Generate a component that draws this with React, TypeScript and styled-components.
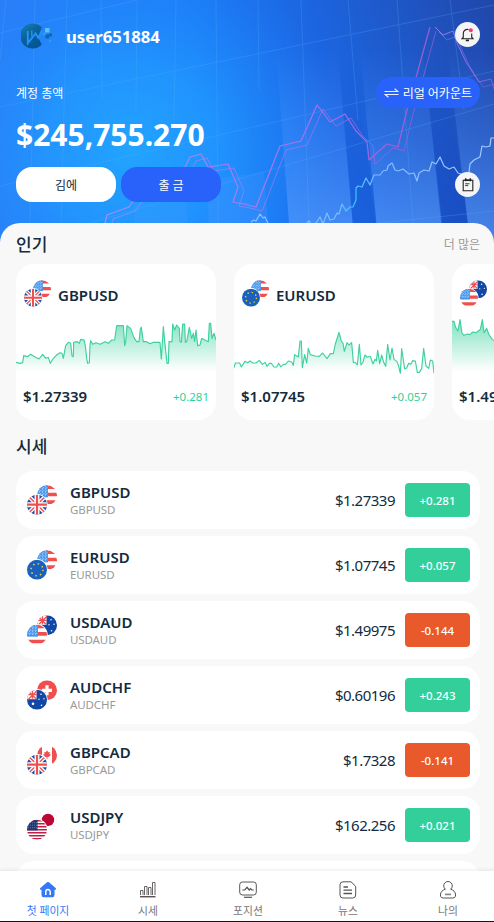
import { ReactNode, useId } from "react";
import styled, { createGlobalStyle } from "styled-components";

type FlagCode = "us" | "usDark" | "gb" | "eu" | "au" | "ch" | "ca" | "jp";

const popular = [
  {
    name: "GBPUSD", price: "$1.27339", change: "+0.281", front: "gb" as FlagCode, back: "us" as FlagCode, origin: [48, 270],
    points: "48,412 60,415 68,413 71,392 82,395 92,388 105,396 117,402 128,388 137,400 145,397 151,415 160,400 170,390 180,383 186,385 190,400 197,362 205,352 212,355 216,393 220,395 221,352 232,350 238,355 242,343 252,345 256,362 260,400 263,415 268,413 270,360 272,347 278,358 288,353 300,358 315,350 325,355 335,345 344,345 350,302 370,302 374,362 377,350 381,302 392,310 402,338 410,350 417,350 421,312 424,307 430,350 440,350 450,356 460,352 480,352 484,402 490,305 496,368 501,415 505,415 507,350 516,350 518,297 524,315 530,300 538,310 540,350 544,352 548,297 554,297 556,352 560,350 568,307 575,340 580,325 584,350 588,315 593,362 600,360 605,340 615,345 625,350 628,295 632,295 636,340 642,325 648,345",
  },
  {
    name: "EURUSD", price: "$1.07745", change: "+0.057", front: "eu" as FlagCode, back: "us" as FlagCode, origin: [27, 165],
    points: "27,323 31,309 44,309 49,321 60,304 68,308 75,303 83,309 93,309 103,301 112,313 120,307 126,319 133,310 139,310 147,321 155,321 161,310 167,320 176,313 182,313 190,303 200,306 205,316 209,284 220,291 225,243 229,243 232,323 239,284 245,309 250,265 256,284 270,288 283,289 293,279 306,296 316,281 325,281 331,252 342,217 349,243 354,250 358,274 366,248 372,255 380,248 385,307 391,308 397,315 403,253 408,315 414,306 420,285 427,292 436,289 444,312 450,298 454,303 458,271 464,311 470,285 476,307 482,319 488,253 495,300 501,264 507,298 516,305 521,318 526,340 530,266 539,327 545,324 551,310 557,313 563,302 571,303 577,337 583,337 590,326 596,265 603,318 611,325 616,300 623,303 627,340",
  },
  {
    name: "USDAUD", price: "$1.49975", change: "-0.144", front: "us" as FlagCode, back: "au" as FlagCode, origin: [681, 165],
    points: "681,184 687,184 692,202 699,213 705,179 711,219 717,226 727,222 735,224 743,216 752,218 760,213 766,208 772,179 777,218 785,205 791,222 800,236 808,242 850,242",
  },
];

const quotes: { name: string; price: string; change: string; front: FlagCode; back: FlagCode }[] = [
  { name: "GBPUSD", price: "$1.27339", change: "+0.281", front: "gb", back: "us" },
  { name: "EURUSD", price: "$1.07745", change: "+0.057", front: "eu", back: "us" },
  { name: "USDAUD", price: "$1.49975", change: "-0.144", front: "us", back: "au" },
  { name: "AUDCHF", price: "$0.60196", change: "+0.243", front: "au", back: "ch" },
  { name: "GBPCAD", price: "$1.7328", change: "-0.141", front: "gb", back: "ca" },
  { name: "USDJPY", price: "$162.256", change: "+0.021", front: "usDark", back: "jp" },
];

const flagArt: Record<FlagCode, ReactNode> = {
  us: (
    <>
      <rect width="20" height="20" fill="#fff" />
      <path d="M0 1.8h20M0 9.2h20M0 16.8h20" stroke="#f04f4d" strokeWidth="3.6" />
      <rect width="11" height="12" fill="#4795ea" />
      <path d="M2.5 0v12M5.5 0v12M8.5 0v12M0 2.5h11M0 5.5h11M0 8.5h11" stroke="#b5d6fb" strokeWidth=".8" strokeDasharray="1.6 1.3" />
    </>
  ),
  usDark: (
    <>
      <rect width="20" height="20" fill="#fff" />
      <path d="M0 1h20M0 4h20M0 7h20M0 10h20M0 13h20M0 16h20M0 19h20" stroke="#bf1f45" strokeWidth="1.5" />
      <rect width="10.5" height="10.7" fill="#21376f" />
      <path d="M1 3h9M1 5.5h9M1 8h9" stroke="#8d9bc0" strokeWidth=".8" strokeDasharray=".8 1.2" />
    </>
  ),
  gb: (
    <>
      <rect width="20" height="20" fill="#2251a5" />
      <path d="M0 0l20 20M20 0L0 20" stroke="#fff" strokeWidth="4" />
      <path d="M0 0l20 20M20 0L0 20" stroke="#f04f4d" strokeWidth="1.4" />
      <path d="M10 0v20M0 10h20" stroke="#fff" strokeWidth="5" />
      <path d="M10 0v20M0 10h20" stroke="#f04f4d" strokeWidth="2.2" />
    </>
  ),
  eu: (
    <>
      <rect width="20" height="20" fill="#1961bd" />
      <circle cx="10" cy="10" r="6" fill="none" stroke="#e6cf4a" strokeWidth="1.5" strokeDasharray="1.5 3.21" />
    </>
  ),
  au: (
    <>
      <rect width="20" height="20" fill="#1347a5" />
      <rect width="9.5" height="9.5" fill="#fff" />
      <path d="M0 0l9 9M10 1L1 10M5.5 0v9M0 5h9.5" stroke="#f04f4d" strokeWidth="1.3" />
      <circle cx="6" cy="14" r="1.3" fill="#fff" />
      <circle cx="14" cy="4.5" r=".8" fill="#fff" />
      <circle cx="17" cy="9" r=".7" fill="#fff" />
      <circle cx="12" cy="9.5" r=".7" fill="#fff" />
      <circle cx="14.5" cy="15.5" r=".8" fill="#fff" />
    </>
  ),
  ch: (
    <>
      <rect width="20" height="20" fill="#f04f4d" />
      <path d="M10 5v10M5 10h10" stroke="#fff" strokeWidth="3.2" />
    </>
  ),
  ca: (
    <>
      <rect width="20" height="20" fill="#fff" />
      <path d="M0 0h5v20H0zM15 0h5v20h-5z" fill="#f04f4d" />
      <path d="M10 5l1.2 2 1.6-.4-.4 2 1.6.8-2.4 2.2H10.4V14h-.8v-2.4H8.4L6 9.4l1.6-.8-.4-2 1.6.4z" fill="#f04f4d" />
    </>
  ),
  jp: (
    <>
      <rect width="20" height="20" fill="#fff" />
      <circle cx="11" cy="9.6" r="6.2" fill="#bd0634" />
    </>
  ),
};

function Flags({ front, back, size }: { front: FlagCode; back: FlagCode; size: number }) {
  const id = useId();
  return (
    <svg width={size} height={size} viewBox="0 0 30 30">
      <clipPath id={id}>
        <circle cx="10" cy="10" r="10" />
      </clipPath>
      <g transform="translate(10 0.3)">
        <g clipPath={`url(#${id})`}>{flagArt[back]}</g>
        {back === "jp" && <circle cx="10" cy="10" r="9.8" fill="none" stroke="#eeeeee" strokeWidth=".5" />}
      </g>
      <circle cx="10" cy="19.7" r="10.7" fill="#fff" />
      <g transform="translate(0 9.7)">
        <g clipPath={`url(#${id})`}>{flagArt[front]}</g>
      </g>
    </svg>
  );
}

function Chart({ points, origin }: { points: string; origin: number[] }) {
  const id = useId();
  const [x, y] = origin;
  return (
    <ChartSvg viewBox={`${x} ${y} 600 180`}>
      <linearGradient id={id} gradientUnits="userSpaceOnUse" x1="0" x2="0" y1={y + 20} y2={y + 168}>
        <stop offset="0" stopColor="#33cf9b" stopOpacity=".6" />
        <stop offset="1" stopColor="#33cf9b" stopOpacity="0" />
      </linearGradient>
      <polygon points={`${x},${y + 180} ${points} ${x + 600},${y + 180}`} fill={`url(#${id})`} />
      <polyline points={points} fill="none" stroke="#3dd0a0" strokeWidth="3.4" strokeLinejoin="round" />
    </ChartSvg>
  );
}

const purple =
  "M105 223l2-8 22-8 5-7 20-18 26-8 5-7 5-10 11-3 7 13 20-3 10 23-5 15 11 2 12 3 24-61 21-5 16-36 4 5 9 12 15-8 11 17 11 11 2 18 18-16 11 3 9-37 23-83";
const purpleEnd = "M435 27l8 8 10-4 4 12 9 19 13 20 12-3 3 10";

function HeroArt() {
  return (
    <HeroSvg viewBox="0 0 494 250" preserveAspectRatio="xMidYMin slice">
      <defs>
        <linearGradient id="sky" x1="0" y1=".15" x2="1" y2="0">
          <stop offset="0" stopColor="#2b7ef8" />
          <stop offset=".38" stopColor="#1d7cf8" />
          <stop offset=".62" stopColor="#1c66e2" />
          <stop offset="1" stopColor="#2147aa" />
        </linearGradient>
        <radialGradient id="glow" gradientUnits="userSpaceOnUse" cx="130" cy="150" r="210">
          <stop offset="0" stopColor="#22a4ff" />
          <stop offset=".4" stopColor="#219cff" stopOpacity=".75" />
          <stop offset="1" stopColor="#1c80fb" stopOpacity="0" />
        </radialGradient>
        <linearGradient id="bar" gradientUnits="userSpaceOnUse" x1="0" y1="50" x2="0" y2="250">
          <stop offset="0" stopColor="#5c9dff" stopOpacity="0" />
          <stop offset=".45" stopColor="#5c9dff" stopOpacity=".26" />
          <stop offset="1" stopColor="#5fa2ff" stopOpacity=".66" />
        </linearGradient>
        <linearGradient id="gap" gradientUnits="userSpaceOnUse" x1="0" y1="60" x2="0" y2="200">
          <stop offset="0" stopColor="#1447c2" stopOpacity="0" />
          <stop offset="1" stopColor="#1447c2" stopOpacity=".45" />
        </linearGradient>
        <linearGradient id="wave" x1="0" x2="1">
          <stop offset="0" stopColor="#8fc0ff" />
          <stop offset=".36" stopColor="#7cbcff" />
          <stop offset=".42" stopColor="#35c8ff" />
          <stop offset=".52" stopColor="#7fb9ff" />
          <stop offset="1" stopColor="#a9c9ff" />
        </linearGradient>
        <linearGradient id="rise" x1="0" x2="1">
          <stop offset="0" stopColor="#a58df8" />
          <stop offset=".6" stopColor="#a972ec" />
          <stop offset="1" stopColor="#9a5ccf" />
        </linearGradient>
      </defs>
      <rect width="494" height="250" fill="url(#sky)" />
      <rect width="494" height="250" fill="url(#glow)" />
      <g fill="url(#bar)">
        <path d="M133 170h52l4 80h-54z" opacity=".25" />
        <path d="M207 180l57-8 6 78h-60z" opacity=".4" />
        <path d="M276 50h62l17 200h-64z" />
        <path d="M360 50h63l22 200h-66z" />
        <path d="M444 20h50v230h-23z" />
      </g>
      <g fill="url(#gap)">
        <path d="M338 60h17l24 190h-24z" opacity=".5" />
        <path d="M424 60h22l25 190h-27z" />
      </g>
      <g fill="none" stroke="#55b0ff" strokeWidth="1" opacity=".25">
        <path d="M0 33L137 0M0 107L494 5M0 186L494 71M90 223L494 104M360 225l134-14" />
        <path d="M6 0L0 60M35 0l-5 223M67 0l-6 223M101 0l1 100M137 0l-1 110M176 0l-2 120M216 0l2 223M258 0l1 90M301 0l8 223M348 0l10 120M397 0l16 223M450 0l14 110" />
      </g>
      <g fill="none" stroke="url(#rise)" strokeLinejoin="round">
        <path d={purple} strokeWidth="1.2" />
        <path d={purpleEnd} opacity=".8" />
        <path d={purple} strokeWidth="1" transform="translate(6 4)" opacity=".7" />
        <path d={purpleEnd} transform="translate(4 5)" opacity=".45" />
      </g>
      <path
        d="M251 222l3-2 2 1 4-7 3 4 2-1 3 6M307 223l2-2 2 3 5-1 4-6 3 7 4-11 3 7 4-1 3-6 2 1 3-10 4 7 4-4 3 0 3-7 0-12 2-2 4 1 4-9 4 7 4-10 6 0 3-4 4-1 1-4 4-3 3 7 3 1 5-2 6 5 5-1 3 8 2-8 5-3 5 1 3-9 4 2 4-7 4 9 5 3 5-2 4 6 6 2 2 5M469 172l1-8 4-4 6-3 2-11 4 1 4-1 1-8 3 0"
        fill="none"
        stroke="url(#wave)"
        strokeWidth="1.2"
        strokeLinejoin="round"
      />
    </HeroSvg>
  );
}

const Logo = () => (
  <svg width="32" height="27" viewBox="0 0 32 27">
    <defs>
      <linearGradient id="logo" x1="0" y1="0" x2=".6" y2="1">
        <stop offset="0" stopColor="#1783b4" />
        <stop offset=".5" stopColor="#0a6399" />
        <stop offset="1" stopColor="#045594" />
      </linearGradient>
    </defs>
    <path d="M20.8 4.5A12.5 12.5 0 1 0 20.8 21.5L17 14z" fill="url(#logo)" />
    <path d="M6.8 8v12.2L14.6 10.500l2.600 4.200L21.500 8" stroke="#2590f8" strokeWidth="1.9" fill="none" />
    <path d="M10.8 7.5v6" stroke="#2590f8" strokeWidth="1.5" />
    <path d="M24 5h4.500v4.500H24z" fill="#5cc0f7" />
    <path d="M28 10.500h3v3h-3zM24.500 11.500h3.500v4h-3.500z" fill="#0e67ab" />
    <path d="M22 9.500h2.500V12H22zM28 17h2v2h-2z" fill="#2f9eea" />
  </svg>
);

const BellIcon = () => (
  <svg width="13" height="14" viewBox="0 0 13 14" fill="none" stroke="#222" strokeWidth="1.1">
    <path d="M7.500 1.500C4.500.9 2.300 2.700 2.300 5.400v3.800L1 10.700h11l-1.300-1.500V5.500" />
    <path d="M4.800 12.400h3.200" strokeWidth="1.7" />
    <circle cx="9.8" cy="2.2" r="2" fill="#f5396b" stroke="none" />
  </svg>
);

const NoteIcon = () => (
  <svg width="12" height="14" viewBox="0 0 12 14" fill="none" stroke="#222" strokeWidth="1.1">
    <path d="M1.200 2.200h9.600v10.600H1.200z" />
    <path d="M2.500 2.200h7" strokeWidth="1.6" />
    <path d="M3.700.3v3M8.300.3v3" strokeWidth="1.4" />
    <path d="M3.200 5.800h4.300M3.200 7.600h3" strokeWidth=".9" />
  </svg>
);

const SwapIcon = () => (
  <svg width="15" height="10" viewBox="0 0 15 10" fill="none" stroke="#fff" strokeWidth="1.2" opacity=".9">
    <path d="M.5 3.500h13.300L10.600.7M14.500 6.500H1.200l3.200 2.800" />
  </svg>
);

const HomeIcon = () => (
  <svg width="18" height="18" viewBox="0 0 18 18">
    <path d="M8 1.300a1.600 1.600 0 0 1 2 0l6.600 5.600c.8.700.4 1.900-.6 1.900h-.5V14a2.300 2.300 0 0 1-2.300 2.300H4.800A2.300 2.300 0 0 1 2.500 14V8.800H2c-1 0-1.400-1.200-.6-1.900z" fill="#3478f6" />
    <path d="M6.800 14v-3.200a2.200 2.200 0 0 1 4.400 0V14" fill="none" stroke="#fff" strokeWidth="1.5" />
  </svg>
);

const BarsIcon = () => (
  <svg width="18" height="18" viewBox="0 0 18 18" fill="none" stroke="#5a5555">
    <path d="M1.500 14V9.500H4V14M5.500 14V5.500H8V14M9.500 14V6.500H12V14M13.500 14V1.500H16V14" strokeWidth=".9" />
    <path d="M1 15.700h15.500" strokeWidth="1.5" />
  </svg>
);

const PositionIcon = () => (
  <svg width="18" height="18" viewBox="0 0 18 18" fill="none" stroke="#555" strokeWidth="1">
    <rect x=".7" y="1" width="16.6" height="13" rx="2.8" />
    <path d="M3.300 9h2.500L8 6.300 10.200 9l1.300-1.400L12.800 9h2" strokeWidth="1.2" />
    <path d="M5 16.300h8" strokeWidth="1.2" />
  </svg>
);

const NewsIcon = () => (
  <svg width="18" height="18" viewBox="0 0 18 18" fill="none" stroke="#555" strokeWidth="1">
    <path d="M4 .8h8l4.700 4.500V14a3 3 0 0 1-3 3H4a3 3 0 0 1-3-3V3.800a3 3 0 0 1 3-3z" />
    <path d="M4.500 6H9M4.500 9.200h8.500M4.500 12.500h8.500" strokeWidth="1.3" />
  </svg>
);

const UserIcon = () => (
  <svg width="18" height="18" viewBox="0 0 18 18" fill="none" stroke="#555" strokeWidth="1">
    <path d="M6.400 8.200a4.300 4.300 0 1 1 5.200 0c2.900.8 5 2.900 5 5.800 0 1.900-1 3-2.800 3H4.200c-1.800 0-2.800-1.100-2.800-3 0-2.900 2.100-5 5-5.800z" />
    <path d="M6 13.400h6" strokeWidth="1.7" stroke="#888" />
  </svg>
);

const tabs = [
  { label: "첫 페이지", icon: <HomeIcon />, active: true },
  { label: "시세", icon: <BarsIcon />, active: false },
  { label: "포지션", icon: <PositionIcon />, active: false },
  { label: "뉴스", icon: <NewsIcon />, active: false },
  { label: "나의", icon: <UserIcon />, active: false },
];

function App() {
  return (
    <Screen>
      <GlobalStyle />
      <Content>
        <Hero>
          <HeroArt />
          <TopBar>
            <User>
              <Logo />
              <UserName>user651884</UserName>
            </User>
            <RoundButton aria-label="알림"><BellIcon /></RoundButton>
          </TopBar>
          <AccountRow>
            <AccountLabel>계정 총액</AccountLabel>
            <AccountSwitch><SwapIcon />리얼 어카운트</AccountSwitch>
          </AccountRow>
          <Balance>$245,755.270</Balance>
          <Actions>
            <ActionButton>김에</ActionButton>
            <ActionButton $primary>출 금</ActionButton>
            <NoteButton aria-label="기록"><NoteIcon /></NoteButton>
          </Actions>
        </Hero>
        <Sheet>
          <SectionHead>
            <Title>인기</Title>
            <More>더 많은</More>
          </SectionHead>
          <Cards>
            {popular.map((item) => (
              <Card key={item.name}>
                <CardHead>
                  <Flags front={item.front} back={item.back} size={27} />
                  <CardName>{item.name}</CardName>
                </CardHead>
                <Chart points={item.points} origin={item.origin} />
                <CardFoot>
                  <CardPrice>{item.price}</CardPrice>
                  <CardChange>{item.change}</CardChange>
                </CardFoot>
              </Card>
            ))}
          </Cards>
          <ListHead>
            <Title>시세</Title>
          </ListHead>
          <List>
            {quotes.map((quote) => (
              <Row key={quote.name}>
                <Flags front={quote.front} back={quote.back} size={30} />
                <Pair>
                  <PairName>{quote.name}</PairName>
                  <PairSub>{quote.name}</PairSub>
                </Pair>
                <Price>{quote.price}</Price>
                <Change $down={quote.change.startsWith("-")}>{quote.change}</Change>
              </Row>
            ))}
            <Row />
          </List>
        </Sheet>
      </Content>
      <TabBar>
        {tabs.map((tab) => (
          <Tab key={tab.label} $active={tab.active}>
            {tab.icon}
            {tab.label}
          </Tab>
        ))}
      </TabBar>
    </Screen>
  );
}

export default App;

const GlobalStyle = createGlobalStyle`
  * {
    box-sizing: border-box;
  }

  body {
    margin: 0;
    background: #f8f8f8;
    font-family: "Noto Sans", "Noto Sans CJK KR", sans-serif;
    color: #132b3d;
  }

  button {
    border: 0;
    padding: 0;
    font-family: inherit;
    cursor: pointer;
  }

  svg {
    display: block;
    flex: none;
  }
`;

const Screen = styled.div`
  display: flex;
  flex-direction: column;
  height: 100vh;
  overflow: hidden;
`;

const Content = styled.main`
  flex: 1;
  min-height: 0;
  overflow: hidden;
`;

const Hero = styled.header`
  position: relative;
  height: 250px;
  padding: 22px 14px 0 16px;
  color: #fff;
`;

const HeroSvg = styled.svg`
  position: absolute;
  inset: 0;
  width: 100%;
  height: 100%;
  z-index: -1;
`;

const TopBar = styled.div`
  display: flex;
  justify-content: space-between;
  height: 28px;
`;

const User = styled.div`
  display: flex;
  align-items: center;
  gap: 13px;
  padding-left: 5px;
`;

const UserName = styled.span`
  font-size: 16.7px;
  font-weight: 700;
`;

const RoundButton = styled.button`
  display: flex;
  align-items: center;
  justify-content: center;
  width: 25px;
  height: 25px;
  border-radius: 50%;
  background: #f5f5f7;
`;

const NoteButton = styled(RoundButton)`
  margin-left: auto;
`;

const AccountRow = styled.div`
  display: flex;
  align-items: center;
  justify-content: space-between;
  height: 31px;
  margin-top: 27px;
`;

const AccountLabel = styled.span`
  font-size: 12px;
`;

const AccountSwitch = styled.button`
  display: flex;
  align-items: center;
  gap: 4px;
  height: 31px;
  padding: 0 8px;
  border-radius: 16px;
  background: #2962fa;
  color: #fff;
  font-size: 12px;
`;

const Balance = styled.div`
  height: 50px;
  margin-top: 2px;
  font-size: 30px;
  font-weight: 700;
  line-height: 50px;
`;

const Actions = styled.div`
  display: flex;
  align-items: center;
  gap: 5px;
  margin-top: 7px;
`;

const ActionButton = styled.button<{ $primary?: boolean }>`
  width: 100px;
  height: 35px;
  border-radius: 16px;
  font-size: 12px;
  color: ${(p) => (p.$primary ? "#fff" : "#132b3d")};
  background: ${(p) => (p.$primary ? "#2962fa" : "#fff")};
`;

const Sheet = styled.section`
  position: relative;
  margin-top: -27px;
  padding-left: 16px;
  border-radius: 20px 20px 0 0;
  background: #f8f8f8;
`;

const SectionHead = styled.div`
  display: flex;
  align-items: center;
  justify-content: space-between;
  height: 41px;
  padding-right: 14px;
`;

const Title = styled.h2`
  margin: 0;
  padding-top: 2px;
  font-size: 17px;
  font-weight: 500;
  line-height: 24px;
`;

const More = styled.span`
  font-size: 12px;
  color: #999;
`;

const Cards = styled.div`
  display: flex;
  gap: 18px;
  overflow: hidden;
`;

const Card = styled.article`
  flex: none;
  width: 200px;
  height: 156px;
  border-radius: 18px;
  background: #fff;
  overflow: hidden;
`;

const CardHead = styled.div`
  display: flex;
  align-items: center;
  gap: 7px;
  height: 51px;
  padding: 8px 8px 0;
`;

const ChartSvg = styled.svg`
  width: 200px;
  height: 60px;
`;

const CardFoot = styled.div`
  display: flex;
  align-items: center;
  justify-content: space-between;
  height: 42px;
  padding: 0 7px;
`;

const PairName = styled.span`
  font-size: 15px;
  font-weight: 600;
  line-height: 18px;
`;

const CardName = styled(PairName)`
  padding-top: 2px;
`;

const CardPrice = styled.span`
  font-size: 15px;
  font-weight: 600;
`;

const CardChange = styled.span`
  font-size: 11.5px;
  color: #33cf9b;
`;

const ListHead = styled.div`
  display: flex;
  align-items: center;
  height: 51px;
`;

const List = styled.div`
  display: flex;
  flex-direction: column;
  gap: 7px;
  padding-right: 14px;
`;

const Row = styled.div`
  display: flex;
  align-items: center;
  height: 58px;
  padding: 0 10px 0 11px;
  border-radius: 18px;
  background: #fff;
`;

const Pair = styled.div`
  display: flex;
  flex-direction: column;
  gap: 1px;
  flex: 1;
  margin-left: 13px;
  padding-top: 1px;
`;

const PairSub = styled.span`
  font-size: 11.5px;
  line-height: 16px;
  letter-spacing: -0.1px;
  color: #999;
`;

const Price = styled.span`
  font-size: 15px;
  letter-spacing: -0.5px;
`;

const Change = styled.span<{ $down: boolean }>`
  width: 65px;
  height: 34px;
  margin-left: 10px;
  border-radius: 4px;
  background: ${(p) => (p.$down ? "#e9592b" : "#33cf9b")};
  color: #fff;
  font-size: 11.5px;
  font-weight: 500;
  line-height: 36px;
  text-align: center;
`;

const TabBar = styled.nav`
  position: relative;
  display: flex;
  height: 51px;
  margin-right: -6px;
  border-bottom: 1px solid #15171a;
  background: #fff;
  box-shadow: 0 -1px 4px rgba(0, 0, 0, 0.08);
`;

const Tab = styled.div<{ $active: boolean }>`
  display: flex;
  flex: 1;
  flex-direction: column;
  align-items: center;
  gap: 4px;
  padding: 10px 4px 0 0;
  font-size: 10.8px;
  line-height: 15px;
  color: ${(p) => (p.$active ? "#3478f6" : "#777")};
`;
